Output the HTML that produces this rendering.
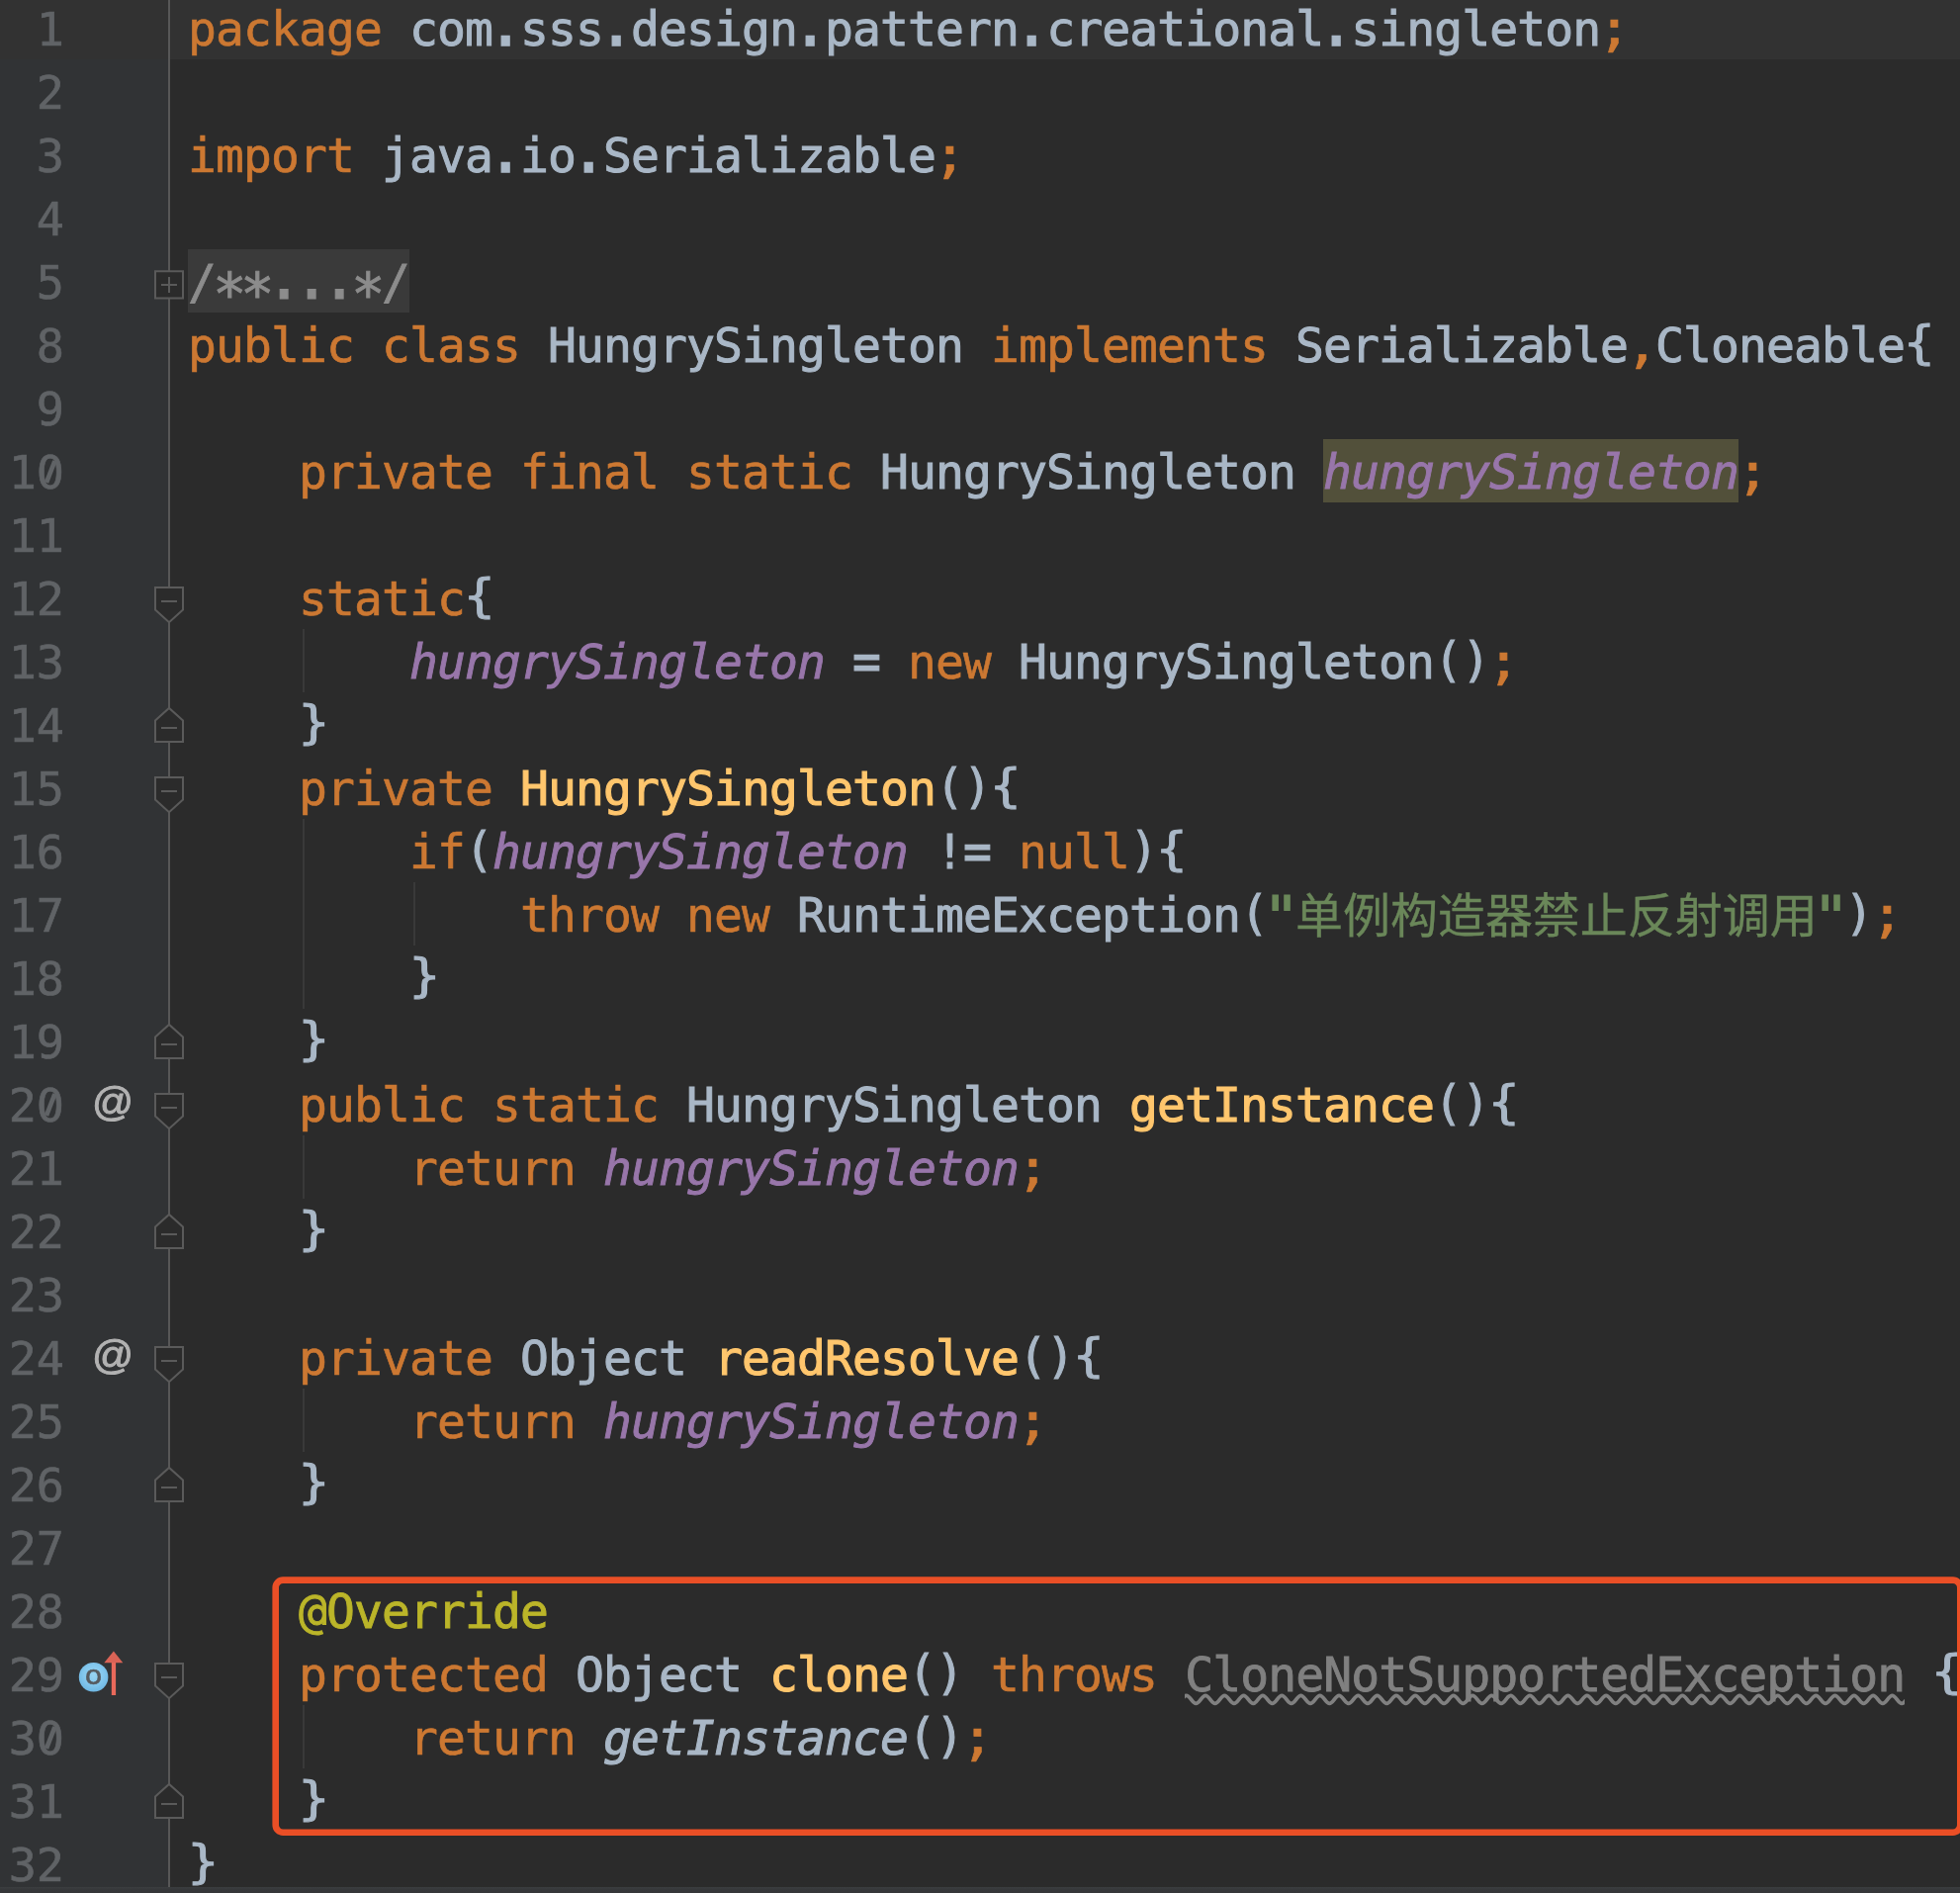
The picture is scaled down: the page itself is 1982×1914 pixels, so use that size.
<!DOCTYPE html>
<html lang="zh"><head><meta charset="utf-8"><title>HungrySingleton.java</title>
<style>
*{margin:0;padding:0;box-sizing:border-box}
html,body{width:1982px;height:1914px;overflow:hidden;background:#2b2b2b}
body{position:relative;font-family:"DejaVu Sans Mono","Liberation Mono","Noto Sans CJK SC",monospace;font-size:48px;color:#a9b7c6;letter-spacing:-0.8984px;-webkit-text-stroke:0.65px}
#gutter{position:absolute;left:0;top:0;width:170px;height:1914px;background:#313335}
#gline{position:absolute;left:170px;top:0;width:2px;height:1914px;background:#575757}
#curg{position:absolute;left:0;top:0;width:170px;height:60px;background:#323232}
#cure{position:absolute;left:172px;top:0;width:1810px;height:60px;background:#323232}
.ln{will-change:transform;position:absolute;left:0;width:64.7px;height:64px;line-height:64px;text-align:right;color:#606366;white-space:pre;font-size:46.8px;letter-spacing:-0.176px}
.l{will-change:transform;position:absolute;left:190px;height:64px;line-height:64px;white-space:pre}
.k{color:#cc7832}
.d{color:#a9b7c6;-webkit-text-stroke:1px}
.f,.fh{color:#9876aa;font-style:italic;-webkit-text-stroke:0.9px}
.m{color:#ffc66d;-webkit-text-stroke:1.1px}
.s{color:#6a8759;-webkit-text-stroke:0.8px}
.a{color:#bbb529;-webkit-text-stroke:0.9px}
.c{color:#a9b7c6;font-style:italic;-webkit-text-stroke:1px}
.u{color:#808080;-webkit-text-stroke:0.85px}
.fold{color:#8c8c8c;-webkit-text-stroke:0.8px}
.bg{position:absolute;height:64px}
.p{display:inline-block;transform-origin:18.1px 49px;transform:scale(1.33)}
.br{display:inline-block;transform:translate(0.3px,-3.2px) scale(1.1,0.975)}
.bc{display:inline-block;transform:translate(0.9px,-3.2px) scale(1.1,0.975)}
.pa{position:relative;top:-2.5px}
.q{display:inline-block;transform-origin:50% 27.3px;transform:translate(-1.1px,0.9px) scale(1.32,1.19)}
.sc{display:inline-block;transform-origin:50% 55.9px;transform:scale(1.19,1.055)}
.eq{display:inline-block;transform:translateY(-0.8px) scaleY(1.14)}
.ast{display:inline-block;transform-origin:14.4px 24.06px;transform:translate(-0.14px,9.8px) scale(1.18,1.24)}
.cjk{color:#6a8759;font-family:"DejaVu Sans Mono","Liberation Mono","Noto Sans CJK SC",monospace;display:inline-block;width:527.5px;font-size:48px;letter-spacing:-0.045px;-webkit-text-stroke:0.35px;position:relative;top:0.6px;vertical-align:top;height:64px;line-height:64px}
.ig{position:absolute;width:2px;background:#393939}
svg{position:absolute;overflow:visible}
.at{position:absolute;left:92px;width:44px;height:64px;line-height:64px;text-align:center;color:#b2b2b2;font-family:"Liberation Sans",sans-serif;font-size:41.5px;letter-spacing:0;-webkit-text-stroke:1px;will-change:transform}
#bot{position:absolute;left:0;top:1907.5px;width:1982px;height:7px;background:linear-gradient(#3c3e40,#36383a 35%,#343638)}
</style></head>
<body>
<div id="gutter"></div><div id="curg"></div><div id="cure"></div><div id="gline"></div>
<div class="ig" style="left:306px;top:636px;height:64px"></div>
<div class="ig" style="left:306px;top:828px;height:192px"></div>
<div class="ig" style="left:418px;top:892px;height:64px"></div>
<div class="ig" style="left:306px;top:1148px;height:64px"></div>
<div class="ig" style="left:306px;top:1404px;height:64px"></div>
<div class="ig" style="left:306px;top:1724px;height:64px"></div>
<div class="bg" style="left:190px;top:252px;width:224px;background:#3a3a3a"></div><div class="bg" style="left:1338px;top:444px;width:420px;background:#52503a"></div>
<div class="ln" style="top:-2px">1</div><div class="l" style="top:-3px"><span class="k">package </span><span class="d">com<span class="p">.</span>sss<span class="p">.</span>design<span class="p">.</span>pattern<span class="p">.</span>creational<span class="p">.</span>singleton</span><span class="k"><span class="sc">;</span></span></div>
<div class="ln" style="top:62px">2</div>
<div class="ln" style="top:126px">3</div><div class="l" style="top:125px"><span class="k">import </span><span class="d">java<span class="p">.</span>io<span class="p">.</span>Serializable</span><span class="k"><span class="sc">;</span></span></div>
<div class="ln" style="top:190px">4</div>
<div class="ln" style="top:254px">5</div><div class="l" style="top:253px"><span class="fold">/<span class="ast">*</span><span class="ast">*</span><span class="p">.</span><span class="p">.</span><span class="p">.</span><span class="ast">*</span>/</span></div>
<div class="ln" style="top:318px">8</div><div class="l" style="top:317px"><span class="k">public class </span><span class="d">HungrySingleton </span><span class="k">implements </span><span class="d">Serializable</span><span class="k"><span class="sc">,</span></span><span class="d">Cloneable<span class="br">{</span></span></div>
<div class="ln" style="top:382px">9</div>
<div class="ln" style="top:446px">10</div><div class="l" style="top:445px"><span class="d">    </span><span class="k">private final static </span><span class="d">HungrySingleton </span><span class="fh">hungrySingleton</span><span class="k"><span class="sc">;</span></span></div>
<div class="ln" style="top:510px">11</div>
<div class="ln" style="top:574px">12</div><div class="l" style="top:573px"><span class="d">    </span><span class="k">static</span><span class="d"><span class="br">{</span></span></div>
<div class="ln" style="top:638px">13</div><div class="l" style="top:637px"><span class="d">        </span><span class="f">hungrySingleton</span><span class="d"> <span class="eq">=</span> </span><span class="k">new </span><span class="d">HungrySingleton<span class="pa">(</span><span class="pa">)</span></span><span class="k"><span class="sc">;</span></span></div>
<div class="ln" style="top:702px">14</div><div class="l" style="top:701px"><span class="d">    <span class="bc">}</span></span></div>
<div class="ln" style="top:766px">15</div><div class="l" style="top:765px"><span class="d">    </span><span class="k">private </span><span class="m">HungrySingleton</span><span class="d"><span class="pa">(</span><span class="pa">)</span><span class="br">{</span></span></div>
<div class="ln" style="top:830px">16</div><div class="l" style="top:829px"><span class="d">        </span><span class="k">if</span><span class="d"><span class="pa">(</span></span><span class="f">hungrySingleton</span><span class="d"> !<span class="eq">=</span> </span><span class="k">null</span><span class="d"><span class="pa">)</span><span class="br">{</span></span></div>
<div class="ln" style="top:894px">17</div><div class="l" style="top:893px"><span class="d">            </span><span class="k">throw new </span><span class="d">RuntimeException<span class="pa">(</span></span><span class="s"><span class="q">"</span></span><span class="cjk">单例构造器禁止反射调用</span><span class="s"><span class="q">"</span></span><span class="d"><span class="pa">)</span></span><span class="k"><span class="sc">;</span></span></div>
<div class="ln" style="top:958px">18</div><div class="l" style="top:957px"><span class="d">        <span class="bc">}</span></span></div>
<div class="ln" style="top:1022px">19</div><div class="l" style="top:1021px"><span class="d">    <span class="bc">}</span></span></div>
<div class="ln" style="top:1086px">20</div><div class="l" style="top:1085px"><span class="d">    </span><span class="k">public static </span><span class="d">HungrySingleton </span><span class="m">getInstance</span><span class="d"><span class="pa">(</span><span class="pa">)</span><span class="br">{</span></span></div>
<div class="ln" style="top:1150px">21</div><div class="l" style="top:1149px"><span class="d">        </span><span class="k">return </span><span class="f">hungrySingleton</span><span class="k"><span class="sc">;</span></span></div>
<div class="ln" style="top:1214px">22</div><div class="l" style="top:1213px"><span class="d">    <span class="bc">}</span></span></div>
<div class="ln" style="top:1278px">23</div>
<div class="ln" style="top:1342px">24</div><div class="l" style="top:1341px"><span class="d">    </span><span class="k">private </span><span class="d">Object </span><span class="m">readResolve</span><span class="d"><span class="pa">(</span><span class="pa">)</span><span class="br">{</span></span></div>
<div class="ln" style="top:1406px">25</div><div class="l" style="top:1405px"><span class="d">        </span><span class="k">return </span><span class="f">hungrySingleton</span><span class="k"><span class="sc">;</span></span></div>
<div class="ln" style="top:1470px">26</div><div class="l" style="top:1469px"><span class="d">    <span class="bc">}</span></span></div>
<div class="ln" style="top:1534px">27</div>
<div class="ln" style="top:1598px">28</div><div class="l" style="top:1597px"><span class="d">    </span><span class="a">@Override</span></div>
<div class="ln" style="top:1662px">29</div><div class="l" style="top:1661px"><span class="d">    </span><span class="k">protected </span><span class="d">Object </span><span class="m">clone</span><span class="d"><span class="pa">(</span><span class="pa">)</span> </span><span class="k">throws </span><span class="u">CloneNotSupportedException</span><span class="d"> <span class="br">{</span></span></div>
<div class="ln" style="top:1726px">30</div><div class="l" style="top:1725px"><span class="d">        </span><span class="k">return </span><span class="c">getInstance</span><span class="d"><span class="pa">(</span><span class="pa">)</span></span><span class="k"><span class="sc">;</span></span></div>
<div class="ln" style="top:1790px">31</div><div class="l" style="top:1789px"><span class="d">    <span class="bc">}</span></span></div>
<div class="ln" style="top:1854px">32</div><div class="l" style="top:1853px"><span class="d"><span class="bc">}</span></span></div>
<svg style="left:0;top:444px" width="70" height="64" viewBox="0 0 70 64"><circle cx="50.9" cy="33" r="4.5" fill="#313335"/><path d="M47.0,43.9L55.4,22.1" stroke="#606366" stroke-width="4.6" fill="none"/></svg>
<svg style="left:0;top:1084px" width="70" height="64" viewBox="0 0 70 64"><circle cx="50.9" cy="33" r="4.5" fill="#313335"/><path d="M47.0,43.9L55.4,22.1" stroke="#606366" stroke-width="4.6" fill="none"/></svg>
<svg style="left:0;top:1724px" width="70" height="64" viewBox="0 0 70 64"><circle cx="50.9" cy="33" r="4.5" fill="#313335"/><path d="M47.0,43.9L55.4,22.1" stroke="#606366" stroke-width="4.6" fill="none"/></svg>
<svg style="left:0;top:252px" width="200" height="64" viewBox="0 0 200 64"><path d="M157,22.2H185V49.5H157Z" fill="#2b2b2b" stroke="#5a5a5a" stroke-width="2" stroke-linejoin="miter"/><path d="M163,36H179M171,28V44" stroke="#5a5a5a" stroke-width="2" fill="none"/></svg>
<svg style="left:0;top:572px" width="200" height="64" viewBox="0 0 200 64"><path d="M157,22.1H185V44.6L171,57.2L157,44.6Z" fill="#2b2b2b" stroke="#5a5a5a" stroke-width="2" stroke-linejoin="miter"/><path d="M163,36H179" stroke="#5a5a5a" stroke-width="2" fill="none"/></svg>
<svg style="left:0;top:764px" width="200" height="64" viewBox="0 0 200 64"><path d="M157,22.1H185V44.6L171,57.2L157,44.6Z" fill="#2b2b2b" stroke="#5a5a5a" stroke-width="2" stroke-linejoin="miter"/><path d="M163,36H179" stroke="#5a5a5a" stroke-width="2" fill="none"/></svg>
<svg style="left:0;top:1084px" width="200" height="64" viewBox="0 0 200 64"><path d="M157,22.1H185V44.6L171,57.2L157,44.6Z" fill="#2b2b2b" stroke="#5a5a5a" stroke-width="2" stroke-linejoin="miter"/><path d="M163,36H179" stroke="#5a5a5a" stroke-width="2" fill="none"/></svg>
<svg style="left:0;top:1340px" width="200" height="64" viewBox="0 0 200 64"><path d="M157,22.1H185V44.6L171,57.2L157,44.6Z" fill="#2b2b2b" stroke="#5a5a5a" stroke-width="2" stroke-linejoin="miter"/><path d="M163,36H179" stroke="#5a5a5a" stroke-width="2" fill="none"/></svg>
<svg style="left:0;top:1660px" width="200" height="64" viewBox="0 0 200 64"><path d="M157,22.1H185V44.6L171,57.2L157,44.6Z" fill="#2b2b2b" stroke="#5a5a5a" stroke-width="2" stroke-linejoin="miter"/><path d="M163,36H179" stroke="#5a5a5a" stroke-width="2" fill="none"/></svg>
<svg style="left:0;top:700px" width="200" height="64" viewBox="0 0 200 64"><path d="M157,50H185V28.4L171,15.9L157,28.4Z" fill="#2b2b2b" stroke="#5a5a5a" stroke-width="2" stroke-linejoin="miter"/><path d="M163,36H179" stroke="#5a5a5a" stroke-width="2" fill="none"/></svg>
<svg style="left:0;top:1020px" width="200" height="64" viewBox="0 0 200 64"><path d="M157,50H185V28.4L171,15.9L157,28.4Z" fill="#2b2b2b" stroke="#5a5a5a" stroke-width="2" stroke-linejoin="miter"/><path d="M163,36H179" stroke="#5a5a5a" stroke-width="2" fill="none"/></svg>
<svg style="left:0;top:1212px" width="200" height="64" viewBox="0 0 200 64"><path d="M157,50H185V28.4L171,15.9L157,28.4Z" fill="#2b2b2b" stroke="#5a5a5a" stroke-width="2" stroke-linejoin="miter"/><path d="M163,36H179" stroke="#5a5a5a" stroke-width="2" fill="none"/></svg>
<svg style="left:0;top:1468px" width="200" height="64" viewBox="0 0 200 64"><path d="M157,50H185V28.4L171,15.9L157,28.4Z" fill="#2b2b2b" stroke="#5a5a5a" stroke-width="2" stroke-linejoin="miter"/><path d="M163,36H179" stroke="#5a5a5a" stroke-width="2" fill="none"/></svg>
<svg style="left:0;top:1788px" width="200" height="64" viewBox="0 0 200 64"><path d="M157,50H185V28.4L171,15.9L157,28.4Z" fill="#2b2b2b" stroke="#5a5a5a" stroke-width="2" stroke-linejoin="miter"/><path d="M163,36H179" stroke="#5a5a5a" stroke-width="2" fill="none"/></svg>
<div class="at" style="top:1082.2px">@</div>
<div class="at" style="top:1338.2px">@</div>
<svg style="left:0;top:1660px" width="170" height="64" viewBox="0 0 170 64"><defs><radialGradient id="og" cx="50%" cy="42%" r="60%"><stop offset="0" stop-color="#97d3f2"/><stop offset="0.55" stop-color="#84c8ee"/><stop offset="1" stop-color="#6db6e2"/></radialGradient></defs><circle cx="94.6" cy="35.7" r="14.8" fill="url(#og)"/><text x="94.6" y="42.9" text-anchor="middle" font-family="DejaVu Sans,Liberation Sans,sans-serif" font-size="26.6" letter-spacing="0" fill="#565b60" stroke="#565b60" stroke-width="0.55" transform="translate(94.6 0) scale(1.08 1) translate(-94.6 0)">o</text><rect x="112.8" y="19" width="4.3" height="35" fill="#e9695b"/><path d="M105.3,21.3L114.9,9.6L124.3,21.3Z" fill="#d96356"/></svg>
<svg style="left:1198px;top:1660px;overflow:hidden" width="728" height="74" viewBox="1198 0 728 74"><path d="M1180.46,54.35C1183.97,54.35 1186.59,62.35 1190.11,62.35C1193.62,62.35 1196.24,54.35 1199.75,54.35C1203.26,54.35 1205.88,62.35 1209.39,62.35C1212.91,62.35 1215.53,54.35 1219.04,54.35C1222.55,54.35 1225.17,62.35 1228.68,62.35C1232.20,62.35 1234.82,54.35 1238.33,54.35C1241.84,54.35 1244.46,62.35 1247.97,62.35C1251.49,62.35 1254.11,54.35 1257.62,54.35C1261.13,54.35 1263.75,62.35 1267.26,62.35C1270.78,62.35 1273.40,54.35 1276.91,54.35C1280.42,54.35 1283.04,62.35 1286.55,62.35C1290.07,62.35 1292.69,54.35 1296.20,54.35C1299.71,54.35 1302.33,62.35 1305.84,62.35C1309.36,62.35 1311.98,54.35 1315.49,54.35C1319.00,54.35 1321.62,62.35 1325.13,62.35C1328.65,62.35 1331.27,54.35 1334.78,54.35C1338.29,54.35 1340.91,62.35 1344.42,62.35C1347.94,62.35 1350.56,54.35 1354.07,54.35C1357.58,54.35 1360.20,62.35 1363.71,62.35C1367.23,62.35 1369.85,54.35 1373.36,54.35C1376.87,54.35 1379.49,62.35 1383.00,62.35C1386.52,62.35 1389.14,54.35 1392.65,54.35C1396.16,54.35 1398.78,62.35 1402.29,62.35C1405.81,62.35 1408.43,54.35 1411.94,54.35C1415.45,54.35 1418.07,62.35 1421.58,62.35C1425.10,62.35 1427.72,54.35 1431.23,54.35C1434.74,54.35 1437.36,62.35 1440.87,62.35C1444.39,62.35 1447.01,54.35 1450.52,54.35C1454.03,54.35 1456.65,62.35 1460.16,62.35C1463.68,62.35 1466.30,54.35 1469.81,54.35C1473.32,54.35 1475.94,62.35 1479.45,62.35C1482.97,62.35 1485.59,54.35 1489.10,54.35C1492.61,54.35 1495.23,62.35 1498.74,62.35C1502.26,62.35 1504.88,54.35 1508.39,54.35C1511.90,54.35 1514.52,62.35 1518.03,62.35C1521.55,62.35 1524.17,54.35 1527.68,54.35C1531.19,54.35 1533.81,62.35 1537.32,62.35C1540.84,62.35 1543.46,54.35 1546.97,54.35C1550.48,54.35 1553.10,62.35 1556.61,62.35C1560.13,62.35 1562.75,54.35 1566.26,54.35C1569.77,54.35 1572.39,62.35 1575.90,62.35C1579.42,62.35 1582.04,54.35 1585.55,54.35C1589.06,54.35 1591.68,62.35 1595.19,62.35C1598.71,62.35 1601.33,54.35 1604.84,54.35C1608.35,54.35 1610.97,62.35 1614.48,62.35C1618.00,62.35 1620.62,54.35 1624.13,54.35C1627.64,54.35 1630.26,62.35 1633.77,62.35C1637.29,62.35 1639.91,54.35 1643.42,54.35C1646.93,54.35 1649.55,62.35 1653.06,62.35C1656.58,62.35 1659.20,54.35 1662.71,54.35C1666.22,54.35 1668.84,62.35 1672.35,62.35C1675.87,62.35 1678.49,54.35 1682.00,54.35C1685.51,54.35 1688.13,62.35 1691.64,62.35C1695.16,62.35 1697.78,54.35 1701.29,54.35C1704.80,54.35 1707.42,62.35 1710.93,62.35C1714.45,62.35 1717.07,54.35 1720.58,54.35C1724.09,54.35 1726.71,62.35 1730.22,62.35C1733.74,62.35 1736.36,54.35 1739.87,54.35C1743.38,54.35 1746.00,62.35 1749.51,62.35C1753.03,62.35 1755.65,54.35 1759.16,54.35C1762.67,54.35 1765.29,62.35 1768.80,62.35C1772.32,62.35 1774.94,54.35 1778.45,54.35C1781.96,54.35 1784.58,62.35 1788.09,62.35C1791.61,62.35 1794.23,54.35 1797.74,54.35C1801.25,54.35 1803.87,62.35 1807.38,62.35C1810.90,62.35 1813.52,54.35 1817.03,54.35C1820.54,54.35 1823.16,62.35 1826.67,62.35C1830.19,62.35 1832.81,54.35 1836.32,54.35C1839.83,54.35 1842.45,62.35 1845.96,62.35C1849.48,62.35 1852.10,54.35 1855.61,54.35C1859.12,54.35 1861.74,62.35 1865.25,62.35C1868.77,62.35 1871.39,54.35 1874.90,54.35C1878.41,54.35 1881.03,62.35 1884.54,62.35C1888.06,62.35 1890.68,54.35 1894.19,54.35C1897.70,54.35 1900.32,62.35 1903.83,62.35C1907.35,62.35 1909.97,54.35 1913.48,54.35C1916.99,54.35 1919.61,62.35 1923.12,62.35C1926.64,62.35 1929.26,54.35 1932.77,54.35C1936.28,54.35 1938.90,62.35 1942.41,62.35C1945.93,62.35 1948.55,54.35 1952.06,54.35" stroke="#808080" stroke-width="3.9" fill="none"/></svg>
<svg style="left:0;top:0" width="1982" height="1914" viewBox="0 0 1982 1914"><rect x="278.7" y="1597.6" width="1703.6" height="255.1" rx="7.5" ry="7.5" fill="none" stroke="#ea4f26" stroke-width="6.6"/></svg>
<div id="bot"></div>
</body></html>
